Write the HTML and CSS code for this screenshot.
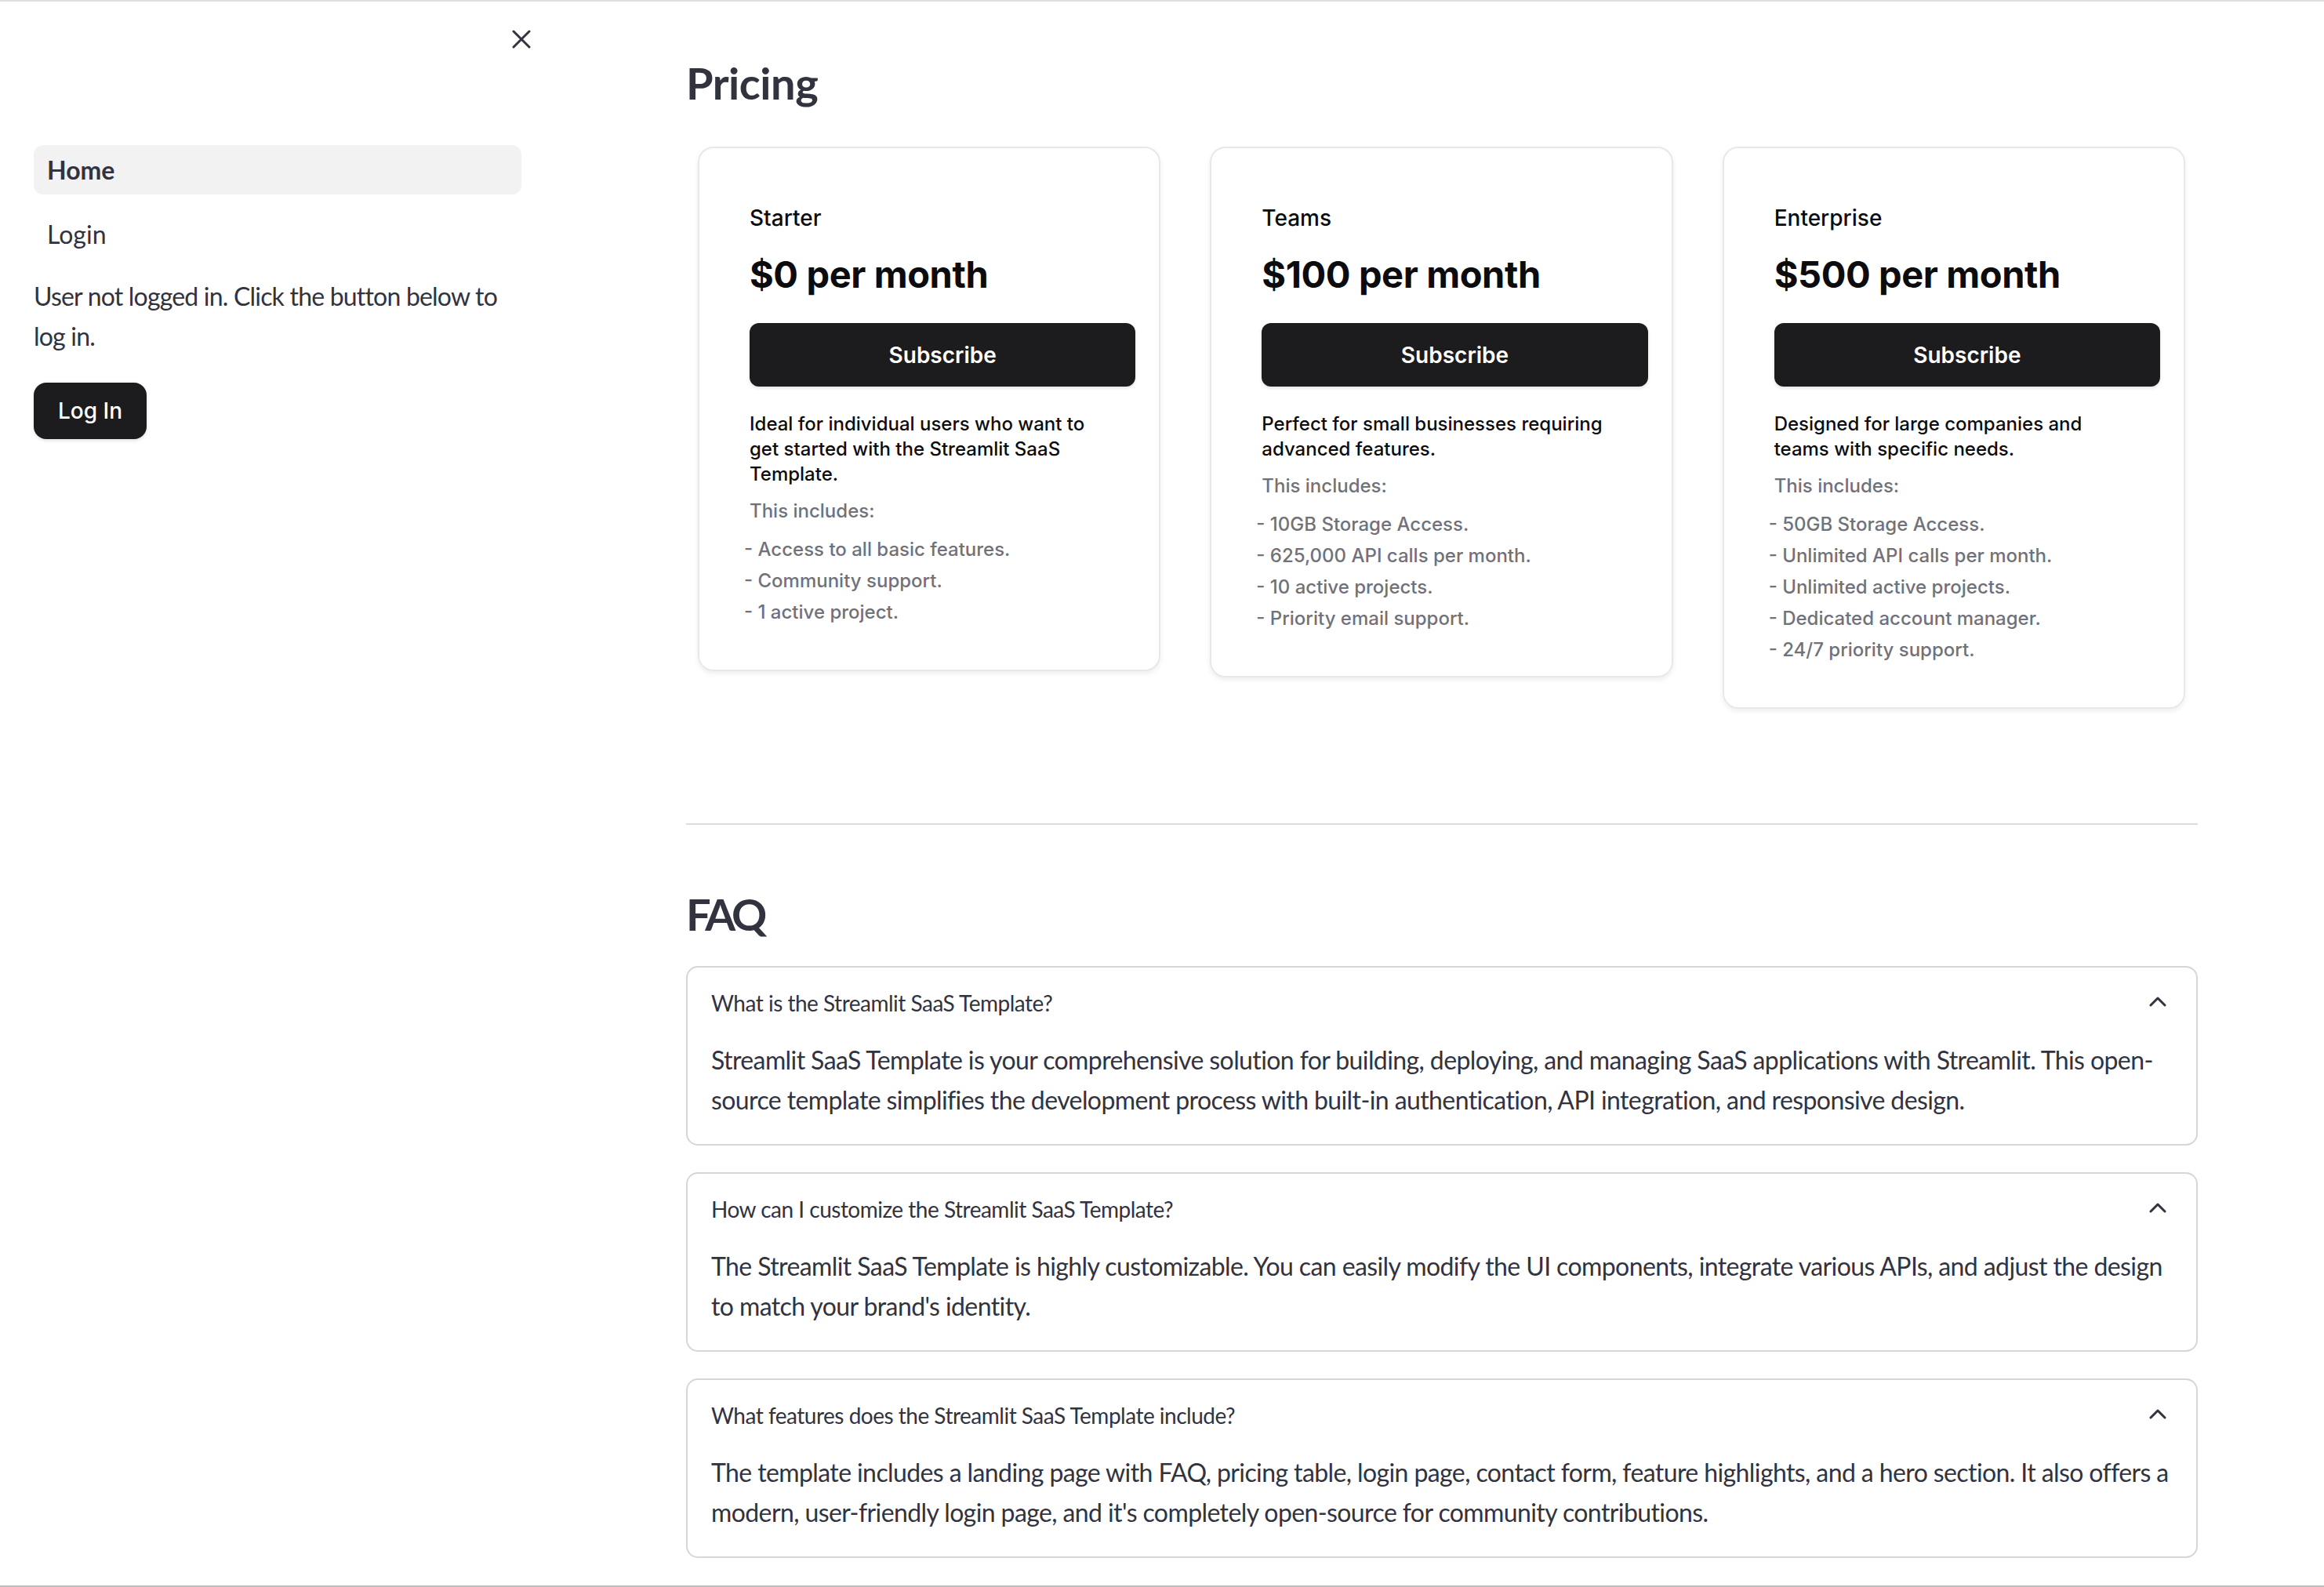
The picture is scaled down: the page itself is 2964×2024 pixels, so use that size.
FILE: index.html
```html
<!DOCTYPE html>
<html lang="en">
<head>
<meta charset="utf-8">
<title>Pricing</title>
<link rel="stylesheet" href="styles.css">
</head>
<body>
<div class="app">
  <aside class="sidebar">
    <div class="sb-head">
      <button class="close-btn" aria-label="Close sidebar">
        <svg width="24" height="24" viewBox="0 0 24 24"><path d="M2 2 L22 22 M22 2 L2 22" stroke="#31333f" stroke-width="3" stroke-linecap="round" fill="none"/></svg>
      </button>
    </div>
    <nav class="nav">
      <a class="nav-item active">Home</a>
      <a class="nav-item">Login</a>
    </nav>
    <p class="sb-text">User not logged in. Click the button below to log in.</p>
    <button class="login-btn">Log In</button>
  </aside>

  <main class="main">
    <h3 class="heading">Pricing</h3>
    <div class="cards">
      <div class="col">
        <div class="card">
          <div class="plan">Starter</div>
          <div class="price">$0 per month</div>
          <button class="sub-btn">Subscribe</button>
          <p class="desc">Ideal for individual users who want to get started with the Streamlit SaaS Template.</p>
          <p class="incl">This includes:</p>
          <ul class="feats">
            <li>- Access to all basic features.</li>
            <li>- Community support.</li>
            <li>- 1 active project.</li>
          </ul>
        </div>
      </div>
      <div class="col">
        <div class="card">
          <div class="plan">Teams</div>
          <div class="price">$100 per month</div>
          <button class="sub-btn">Subscribe</button>
          <p class="desc">Perfect for small businesses requiring advanced features.</p>
          <p class="incl">This includes:</p>
          <ul class="feats">
            <li>- 10GB Storage Access.</li>
            <li>- 625,000 API calls per month.</li>
            <li>- 10 active projects.</li>
            <li>- Priority email support.</li>
          </ul>
        </div>
      </div>
      <div class="col">
        <div class="card">
          <div class="plan">Enterprise</div>
          <div class="price">$500 per month</div>
          <button class="sub-btn">Subscribe</button>
          <p class="desc">Designed for large companies and teams with specific needs.</p>
          <p class="incl">This includes:</p>
          <ul class="feats">
            <li>- 50GB Storage Access.</li>
            <li>- Unlimited API calls per month.</li>
            <li>- Unlimited active projects.</li>
            <li>- Dedicated account manager.</li>
            <li>- 24/7 priority support.</li>
          </ul>
        </div>
      </div>
    </div>

    <hr class="divider">

    <h3 class="heading faq-title">FAQ</h3>
    <div class="faq">
      <details class="exp" open>
        <summary class="exp-sum"><span>What is the Streamlit SaaS Template?</span>
          <svg class="chev" width="22" height="14" viewBox="0 0 22 14"><path d="M2 12 L11 3 L20 12" stroke="#31333f" stroke-width="3" fill="none" stroke-linecap="round" stroke-linejoin="round"/></svg>
        </summary>
        <div class="exp-body">Streamlit SaaS Template is your comprehensive solution for building, deploying, and managing SaaS applications with Streamlit. This open-source template simplifies the development process with built-in authentication, API integration, and responsive design.</div>
      </details>
      <details class="exp" open>
        <summary class="exp-sum"><span>How can I customize the Streamlit SaaS Template?</span>
          <svg class="chev" width="22" height="14" viewBox="0 0 22 14"><path d="M2 12 L11 3 L20 12" stroke="#31333f" stroke-width="3" fill="none" stroke-linecap="round" stroke-linejoin="round"/></svg>
        </summary>
        <div class="exp-body">The Streamlit SaaS Template is highly customizable. You can easily modify the UI components, integrate various APIs, and adjust the design to match your brand's identity.</div>
      </details>
      <details class="exp" open>
        <summary class="exp-sum"><span>What features does the Streamlit SaaS Template include?</span>
          <svg class="chev" width="22" height="14" viewBox="0 0 22 14"><path d="M2 12 L11 3 L20 12" stroke="#31333f" stroke-width="3" fill="none" stroke-linecap="round" stroke-linejoin="round"/></svg>
        </summary>
        <div class="exp-body">The template includes a landing page with FAQ, pricing table, login page, contact form, feature highlights, and a hero section. It also offers a modern, user-friendly login page, and it's completely open-source for community contributions.</div>
      </details>
    </div>
  </main>
</div>
</body>
</html>
```

FILE: styles.css
```css
* { box-sizing: border-box; }

html, body {
  margin: 0;
  padding: 0;
  background: #ffffff;
}

body {
  font-family: "Lato", "Noto Sans", sans-serif;
  color: #31333f;
}

.app {
  display: flex;
  height: 2024px;
  overflow: hidden;
  border-top: 2px solid #dedede;
  border-bottom: 2px solid #bdbdbd;
}

/* ---------- Sidebar ---------- */
.sidebar {
  width: 708px;
  flex: 0 0 708px;
  padding: 0 43px;
  display: flex;
  flex-direction: column;
  align-items: flex-start;
}

.sb-head {
  width: 622px;
  height: 96px;
  display: flex;
  align-items: center;
  justify-content: flex-end;
}

.close-btn {
  border: 0;
  background: transparent;
  padding: 0;
  width: 24px;
  height: 24px;
  margin-right: -12px;
  display: flex;
}

.nav {
  width: 622px;
  margin-top: 87px;
  display: flex;
  flex-direction: column;
  gap: 19px;
}

.nav-item {
  display: flex;
  align-items: center;
  height: 63px;
  padding: 0 17px;
  border-radius: 12px;
  font-size: 32px;
  color: #31333f;
}

.nav-item.active {
  background: #f2f2f2;
  font-weight: 700;
}

.sb-text {
  margin: 22px 0 0;
  font-size: 32px;
  line-height: 51px;
  width: 622px;
  letter-spacing: -0.8px;
}

.login-btn {
  margin-top: 34px;
  height: 72px;
  padding: 0 31px;
  border: 0;
  border-radius: 16px;
  background: #1c1c1e;
  color: #ffffff;
  font-family: "Inter", "Liberation Sans", sans-serif;
  font-size: 28px;
  font-weight: 500;
  box-shadow: 0 2px 4px rgba(0,0,0,0.12);
}

/* ---------- Main ---------- */
.main {
  flex: 1;
  padding: 70px 161px 0 167px;
}

.heading {
  margin: 0;
  font-size: 56px;
  line-height: 67px;
  font-weight: 700;
  color: #31333f;
  letter-spacing: -0.5px;
}

.cards {
  margin-top: 48px;
  display: grid;
  grid-template-columns: repeat(3, 1fr);
  gap: 32px;
  align-items: start;
}

.card {
  margin: 0 16px 0 15px;
  border: 2px solid #e8e8e8;
  border-radius: 20px;
  box-shadow: 0 3px 6px rgba(0,0,0,0.07);
  padding: 69px 30px 53px 64px;
  font-family: "Inter", "Liberation Sans", sans-serif;
  color: #0c0c0e;
}

.plan {
  font-size: 28px;
  line-height: 40px;
  font-weight: 500;
}

.price {
  margin-top: 24px;
  font-size: 47px;
  line-height: 56px;
  font-weight: 700;
  letter-spacing: -0.4px;
}

.sub-btn {
  display: block;
  width: 100%;
  margin-top: 34px;
  height: 81px;
  border: 0;
  border-radius: 12px;
  background: #1c1c1e;
  color: #ffffff;
  font-family: "Inter", "Liberation Sans", sans-serif;
  font-size: 28px;
  font-weight: 600;
  box-shadow: 0 2px 4px rgba(0,0,0,0.12);
}

.desc {
  margin: 32px 0 0;
  font-size: 24px;
  line-height: 32px;
  font-weight: 500;
  max-width: 455px;
}

.incl {
  margin: 15px 0 0;
  font-size: 24px;
  line-height: 32px;
  color: #71717a;
  font-weight: 500;
}

.feats {
  list-style: none;
  margin: 13px 0 0 -7px;
  padding: 0;
  font-size: 24px;
  line-height: 40px;
  color: #71717a;
  font-weight: 500;
}

/* ---------- Divider ---------- */
.divider {
  margin: 146px 0 0;
  border: 0;
  border-top: 2px solid #dcdcdc;
  height: 0;
}

.faq-title {
  margin-top: 80px;
  letter-spacing: -4px;
}

/* ---------- FAQ ---------- */
.faq {
  margin-top: 33px;
  display: flex;
  flex-direction: column;
  gap: 34px;
}

.exp {
  border: 2px solid #d6d6d8;
  border-radius: 15px;
}

.exp-sum {
  list-style: none;
  display: flex;
  align-items: center;
  justify-content: space-between;
  padding: 23px 38px 25px 30px;
  font-size: 28px;
  line-height: 44px;
  cursor: pointer;
  letter-spacing: -0.5px;
}

.exp-sum::-webkit-details-marker { display: none; }

.chev { display: block; margin-top: -4px; }

.exp-body {
  padding: 0 16px 31px 30px;
  font-size: 32px;
  line-height: 51px;
  letter-spacing: -0.6px;
}
```
